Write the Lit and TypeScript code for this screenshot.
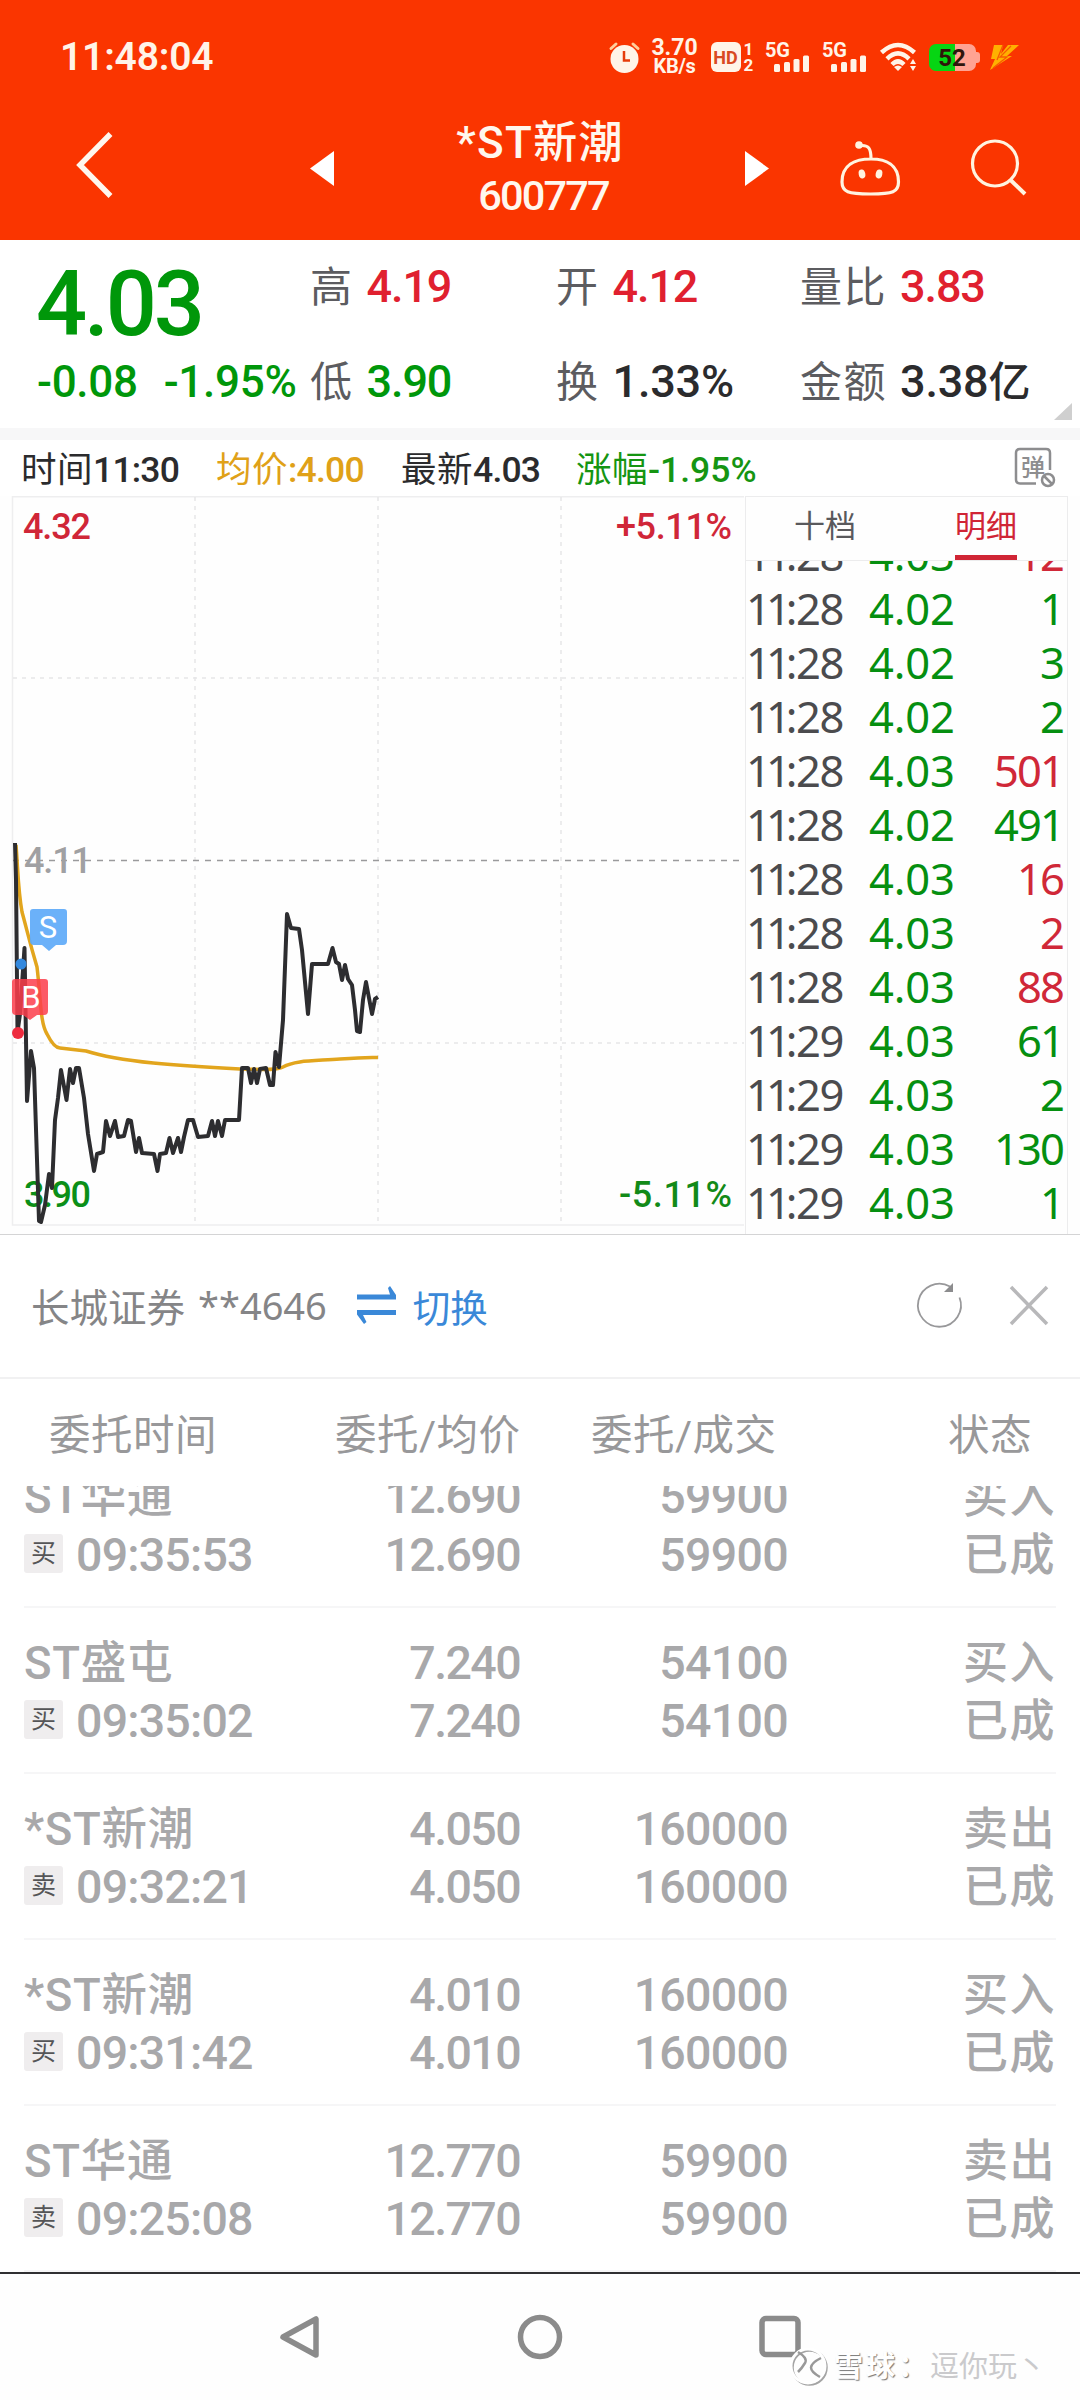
import { LitElement, html, svg, css } from "lit";
import { customElement, property } from "lit/decorators.js";
import { classMap } from "lit/directives/class-map.js";

const base = css`
  * { box-sizing: border-box; }
  :host {
    display: block;
    font-family: Roboto, "Noto Sans CJK SC", "Liberation Sans", sans-serif;
    color: #2b2b2d;
    white-space: nowrap;
  }
  svg { display: block; flex: none; overflow: visible; }
`;

@customElement("status-bar")
class StatusBar extends LitElement {
  static styles = [base, css`
    .bar { height: 114px; padding: 0 61px 0 60px; display: flex; align-items: center; justify-content: space-between; color: #fff4e8; }
    .time { font-size: 39px; font-weight: 600; letter-spacing: -0.2px; }
    .icons { display: flex; align-items: center; }
    .net { width: 46px; margin: 0 13px 0 12px; display: flex; flex-direction: column; align-items: center; font-weight: 700; line-height: 19px; }
    .rate { font-size: 23px; }
    .unit { font-size: 20px; letter-spacing: -0.3px; }
    .hd { width: 30px; height: 30px; border-radius: 6px; background: #fff4e8; color: #d94a22; font: 700 18px/31px Roboto, sans-serif; text-align: center; }
    .sims { width: 12px; margin: 0 10px 0 2px; font: 700 17px/16px Roboto, sans-serif; text-align: center; }
    .signal { margin-right: 11px; }
    .wifi { margin: 0 11px 0 1px; }
    .battery { width: 47px; height: 27px; border-radius: 7px; background: linear-gradient(90deg, #06d513 55%, #ffa392 55%); color: #30150a; font: 700 24px/28px Roboto, sans-serif; text-align: center; }
    .nub { width: 4px; height: 11px; margin-right: 10.500px; background: #ffa392; border-radius: 0 3px 3px 0; }
  `];
  signal() {
    return html`<svg class="signal" width="46" height="32" viewBox="0 0 46 32" fill="#fff4e8">
      <text x="0" y="15.500" font-size="20" font-weight="700" textLength="25">5G</text>
      <rect x="9" y="23" width="6" height="8" rx="1.5"/><rect x="19" y="21" width="6" height="10" rx="1.5"/>
      <rect x="28.500" y="18" width="6" height="13" rx="1.500"/><rect x="38" y="14.500" width="6" height="16.500" rx="1.500"/>
    </svg>`;
  }
  render() {
    return html`<div class="bar">
      <span class="time">11:48:04</span>
      <div class="icons">
        <svg width="31" height="31" viewBox="0 0 31 31" fill="none" stroke="#fff4e8">
          <circle cx="15.500" cy="17" r="14" fill="#fff4e8" stroke="none"/>
          <path d="M2 6.500 7 2M29 6.500 24 2" stroke-width="3" stroke-linecap="round" stroke="#ffcf9c"/>
          <path d="M15 9v9.500h6" stroke="#e63b0a" stroke-width="2.500"/>
        </svg>
        <div class="net"><span class="rate">3.70</span><span class="unit">KB/s</span></div>
        <div class="hd">HD</div>
        <div class="sims">1<br>2</div>
        ${this.signal()}${this.signal()}
        <svg class="wifi" width="38" height="30" viewBox="0 0 38 30" fill="none" stroke="#fff4e8" stroke-width="4.500">
          <path d="M1.500 10.500Q18 -4.500 34.500 10.500M7 16.800Q18 6 29 16.800M12 22.500Q18 16.500 24 22.500"/>
          <path d="M14 25q4-3 8 0l-4 4zM30 22l3-5 3 5zM30 24h6l-3 5z" fill="#fff4e8" stroke="none"/>
        </svg>
        <div class="battery">52</div><div class="nub"></div>
        <svg width="29" height="25" viewBox="0 0 29 25"><path d="M4 0h9l-2 9L18 0h11L17 11h5L0 25 5 14H1z" fill="#ffb000"/><path d="M13 0 7 15M21 1 10 12h7L3 23" stroke="#f75a00" stroke-width="1.300" fill="none"/></svg>
      </div>
    </div>`;
  }
}

@customElement("title-bar")
class TitleBar extends LitElement {
  static styles = [base, css`
    .bar { height: 126px; padding: 0 54px 0 76px; display: grid; grid-template-columns: 234px 24px 411px 95px 131px 1fr; align-items: start; color: #fff7ee; }
    .back { margin-top: 18px; }
    .arrow { margin-top: 37px; }
    .names { display: flex; flex-direction: column; align-items: center; }
    .name { margin: 2px 0 0 1px; font-size: 44px; line-height: 55px; font-weight: 500; letter-spacing: 1.300px; }
    .code { margin-left: 8px; font-size: 41.500px; line-height: 50px; font-weight: 500; letter-spacing: -1.800px; }
    .robot { margin-top: 27px; }
    .search { margin-top: 25px; }
  `];
  render() {
    return html`<div class="bar">
      <svg class="back" width="40" height="66" viewBox="0 0 40 66" fill="none" stroke="#fff7ee" stroke-width="5.500"><path d="M34.500 2 4 33l30.500 31"/></svg>
      <svg class="arrow" width="24" height="35" viewBox="0 0 24 35"><path d="M24 0v35L0 17.500z" fill="#fff"/></svg>
      <div class="names"><span class="name">*ST新潮</span><span class="code">600777</span></div>
      <svg class="arrow" width="24" height="35" viewBox="0 0 24 35"><path d="M0 0v35l24-17.500z" fill="#fff"/></svg>
      <svg class="robot" width="61" height="57" viewBox="0 0 61 57" fill="none" stroke="#fff4e0" stroke-width="3.200">
        <path d="M31 18C46 18 58.500 24 58.500 41 58.500 51 53 53 30.500 53S2 51 2 41C2 24 15 18 31 18zM31 18C31 8 29 4.500 22 4.500"/>
        <circle cx="19" cy="4" r="3.800" fill="#fff4e0" stroke="none"/>
        <ellipse cx="22" cy="33" rx="3.300" ry="4.500" fill="#fff4e0" stroke="none" transform="rotate(-12 22 33)"/>
        <ellipse cx="39" cy="33" rx="3.300" ry="4.500" fill="#fff4e0" stroke="none" transform="rotate(12 39 33)"/>
      </svg>
      <svg class="search" width="56" height="58" viewBox="0 0 56 58" fill="none" stroke="#fff4e0" stroke-width="3.200"><circle cx="24" cy="24.500" r="22.500"/><path d="M39.500 41 54 55" stroke-width="4"/></svg>
    </div>`;
  }
}

@customElement("quote-panel")
class QuotePanel extends LitElement {
  static styles = [base, css`
    .panel { position: relative; height: 200px; padding: 0 0 0 37px; border-bottom: 12px solid #f7f7f8; background: #fff; display: grid; grid-template-columns: 273px 246px 244px 1fr; }
    .price { margin-left: -1px; height: 112px; font-size: 90px; line-height: 130px; font-weight: 500; letter-spacing: -3.200px; }
    .change { display: flex; gap: 26px; font-size: 44px; line-height: 61px; font-weight: 500; letter-spacing: -0.300px; }
    .down { color: #00970a; }
    .up { color: #e0202f; }
    .col { display: grid; grid-template-rows: 95px 60px; align-content: start; padding-top: 17px; }
    .item { display: flex; align-items: baseline; gap: 13px; font-size: 45px; line-height: 60px; font-weight: 500; letter-spacing: -1.100px; }
    .label { font-size: 42px; font-weight: 400; color: #5c5c60; letter-spacing: 1.500px; }
    .wide { letter-spacing: -0.200px; }
    .unit { font-size: 42px; }
    .corner { position: absolute; right: 8px; bottom: 8px; }
  `];
  item(label: string, value: string, tone = "", unit = "") {
    return html`<div class="item"><span class="label">${label}</span><span class=${tone}>${value}<span class="unit">${unit}</span></span></div>`;
  }
  render() {
    return html`<div class="panel">
      <div class="down"><div class="price">4.03</div><div class="change"><span>-0.08</span><span>-1.95%</span></div></div>
      <div class="col">${this.item("高", "4.19", "up")}${this.item("低", "3.90", "down")}</div>
      <div class="col">${this.item("开", "4.12", "up")}${this.item("换", "1.33%", "wide")}</div>
      <div class="col">${this.item("量比", "3.83", "up")}${this.item("金额", "3.38", "wide", "亿")}</div>
      <svg class="corner" width="18" height="17" viewBox="0 0 18 17"><path d="M18 0v17H0z" fill="#cfcfcf"/></svg>
    </div>`;
  }
}

@customElement("cursor-info")
class CursorInfo extends LitElement {
  static styles = [base, css`
    .bar { height: 56px; padding: 0 24px 0 21px; display: grid; grid-template-columns: 195px 185px 175px 1fr 42px; align-items: start; font-size: 35.500px; font-weight: 500; letter-spacing: -0.800px; background: #fff; line-height: 61px; }
    .cjk { font-size: 35.500px; font-weight: 400; letter-spacing: 0.500px; }
    .avg { color: #e0a118; }
    .pct { color: #159512; letter-spacing: 0; }
    .danmu { margin-top: 8px; }
  `];
  render() {
    return html`<div class="bar">
      <span><span class="cjk">时间</span>11:30</span>
      <span class="avg"><span class="cjk">均价</span>:4.00</span>
      <span><span class="cjk">最新</span>4.03</span>
      <span class="pct"><span class="cjk">涨幅</span>-1.95%</span>
      <svg class="danmu" width="42" height="40" viewBox="0 0 42 40" fill="none" stroke="#8d8d8f" stroke-width="2.500">
        <path d="M22 35.500H6q-4 0-4-4V5q0-4 4-4h26q4 0 4 4v17"/>
        <circle cx="34" cy="32" r="6"/><path d="m30 28 8 8"/>
        <text x="7" y="27.500" font-size="24" fill="#8d8d8f" stroke="none">弹</text>
      </svg>
    </div>`;
  }
}

@customElement("trend-chart")
class TrendChart extends LitElement {
  static styles = [base, css`
    .chart { display: block; }
    .lbl { font-size: 36px; font-weight: 500; }
  `];
  render() {
    const price = [
      [15, 843], [16, 880], [17.5, 1032], [20, 1014], [24.5, 948], [27, 1101], [31, 1051], [34, 1068], [39, 1221], [41, 1222], [45, 1205], [49, 1174], [52, 1188],
      [55, 1120], [58, 1098], [61, 1070], [66.500, 1100], [70, 1069], [73, 1083], [76, 1068], [79, 1068], [84, 1098], [88, 1134], [94, 1171], [97, 1154], [103, 1152],
      [106, 1121], [110, 1136], [115, 1121], [118, 1137], [124, 1136], [128, 1120], [131, 1121], [136, 1152], [139, 1138], [142, 1153], [154, 1154], [157.500, 1171],
      [160, 1154], [166, 1153], [169.500, 1138], [173, 1153], [178, 1138], [181, 1152], [184, 1137], [188, 1120], [193, 1120], [198, 1137], [208, 1136], [212, 1121],
      [215, 1136], [218, 1121], [222, 1136], [225, 1120], [239, 1120], [242, 1068], [248, 1068], [251, 1083], [254, 1069], [257, 1083], [260, 1069], [266, 1068],
      [270, 1085], [273, 1085], [275.500, 1052], [279, 1067], [283, 1020], [287, 914], [291, 928], [299, 929], [302, 950], [308, 1014], [312, 964], [328, 964],
      [332.500, 948], [336, 962], [339, 964], [342, 980], [345, 965], [348, 979], [352, 985], [355, 1010], [357, 1031], [360, 1032], [363, 1000], [366, 982],
      [369, 998], [372, 1014], [375, 999], [378, 997],
    ];
    const avg = "M16 845C18 870 18 890 22 912C27 930 29 940 37 967C41 1000 40 1022 47 1034Q54 1048 60 1048L86 1051C120 1062 180 1066 240 1069C258 1069 275 1071 283 1067C295 1060 315 1061 340 1059Q365 1057 378 1057.500";
    return html`<svg class="chart" width="745" height="738" viewBox="0 496 745 738">
      <g fill="none" stroke="#eeeeef" stroke-width="1.500">
        <path d="M12.500 496.700H744M12.500 496v729H744"/>
        <path d="M195 497v728M378 497v728M561 497v728M13 678h731M13 1043h731" stroke="#e6e6e8" stroke-dasharray="4 5"/>
      </g>
      <path d="M13 860.500H742" stroke="#9a9a9c" stroke-width="1.500" stroke-dasharray="6 6"/>
      <text class="lbl" x="24" y="873" fill="#a0a0a2" textLength="68">4.11</text>
      <text class="lbl" x="24" y="1207" fill="#0b8f18" textLength="67">3.90</text>
      <path d=${avg} fill="none" stroke="#e2a51d" stroke-width="3.500"/>
      <polyline points=${price.map((p) => p.join(",")).join(" ")} fill="none" stroke="#2d2d30" stroke-width="4" stroke-linejoin="round"/>
      <text class="lbl" x="23" y="539" fill="#d02638" textLength="68">4.32</text>
      <text class="lbl" x="616" y="539" fill="#d02638" textLength="116">+5.11%</text>
      <text class="lbl" x="619" y="1207" fill="#128a18" textLength="113">-5.11%</text>
      ${svg`<circle cx="21" cy="964" r="5.500" fill="#3388dd"/><circle cx="18" cy="1033" r="6" fill="#ee2b3e"/>
      <path d="M33 909h31q3 0 3 3v29q0 4-4 4h-7l-7 6-7-6h-8q-4 0-4-4v-29q0-3 3-3z" fill="#5eaaf8" fill-opacity=".92"/>
      <path d="M15 979h30q3 0 3 3v29q0 4-4 4h-7l-7 5-7-5h-7q-4 0-4-4v-29q0-3 3-3z" fill="#fb3d4b" fill-opacity=".85"/>
      <text x="48" y="938" font-size="31" fill="#fff" text-anchor="middle">S</text>
      <text x="31" y="1008" font-size="31" fill="#fff" text-anchor="middle">B</text>`}
    </svg>`;
  }
}

@customElement("tick-list")
class TickList extends LitElement {
  static styles = [base, css`
    .panel { width: 323px; height: 738px; border: 1px solid #ececed; border-width: 1px 1px 0; display: flex; flex-direction: column; }
    .tabs { height: 64px; padding: 0 50px 0 48px; display: flex; justify-content: space-between; border-bottom: 1px solid #ececed; font-size: 31px; line-height: 60px; color: #59595c; }
    .active { color: #d02535; border-bottom: 5px solid #d02535; }
    .rows { flex: 1; overflow: hidden; display: flex; flex-direction: column; justify-content: flex-end; }
    .row { flex: none; height: 54px; padding: 0 4px 0 0; display: grid; grid-template-columns: 123px 1fr auto; font: 400 43.500px/46px "Noto Sans", sans-serif; }
    .row:last-child { margin-bottom: 1px; }
    .t { color: #4b4b4e; }
    .ones { letter-spacing: -5px; }
    .rest { letter-spacing: -1.400px; }
    .p, .v { color: #058f10; letter-spacing: -0.100px; }
    .v { letter-spacing: -1.900px; }
    .v.red { color: #d02838; }
  `];
  rows: [string, string, string, boolean][] = [
    ["11:28", "4.03", "12", true], ["11:28", "4.02", "1", false], ["11:28", "4.02", "3", false], ["11:28", "4.02", "2", false],
    ["11:28", "4.03", "501", true], ["11:28", "4.02", "491", false], ["11:28", "4.03", "16", true], ["11:28", "4.03", "2", true],
    ["11:28", "4.03", "88", true], ["11:29", "4.03", "61", false], ["11:29", "4.03", "2", false], ["11:29", "4.03", "130", false],
    ["11:29", "4.03", "1", false],
  ];
  render() {
    return html`<div class="panel">
      <div class="tabs"><span>十档</span><span class="active">明细</span></div>
      <div class="rows">${this.rows.map(([t, p, v, red]) => html`<div class="row"><span class="t"><span class="ones">${t.slice(0, 2)}</span><span class="rest">${t.slice(2)}</span></span><span class="p">${p}</span><span class=${classMap({ v: true, red })}>${v}</span></div>`)}</div>
    </div>`;
  }
}

@customElement("account-bar")
class AccountBar extends LitElement {
  static styles = [base, css`
    .bar { height: 145px; padding: 0 30px 2px 31px; border-top: 1px solid #d4d4d5; border-bottom: 2px solid #f1f1f2; display: flex; align-items: center; background: #fff; font-size: 38.500px; color: #858587; }
    .num { font-family: "Noto Sans", sans-serif; font-size: 38px; margin-left: 13px; font-weight: 400; letter-spacing: 0; }
    .swap { margin: 0 16px 0 30px; }
    .switch { flex: 1; font-size: 37.500px; color: #3a88d8; }
    .refresh { margin-right: 46px; }
  `];
  render() {
    return html`<div class="bar">
      <span>长城证券</span><span class="num">**4646</span>
      <svg class="swap" width="40" height="40" viewBox="0 0 40 40" fill="#3a88d8"><path d="M0 9.500h33L31 3l2-2 6 9v4.500H0zM39 25H0v4.500L7 39l2.500-2L6 30h33z"/></svg>
      <span class="switch">切换</span>
      <svg class="refresh" width="46" height="46" viewBox="0 0 46 46" fill="none" stroke="#98989a" stroke-width="1.800"><path d="M43.500 15.500A21.500 21.500 0 1 1 34 4.500"/><path d="M37 1v9h-9z" fill="#8c8c8e" stroke="none"/></svg>
      <svg width="42" height="42" viewBox="0 0 42 42" fill="none" stroke="#b8b8ba" stroke-width="3.500"><path d="m3 3 36 37M39 3 3 40"/></svg>
    </div>`;
  }
}

@customElement("order-row")
class OrderRow extends LitElement {
  @property() name = "";
  @property() side = "";
  @property() time = "";
  @property() price = "";
  @property() qty = "";
  static styles = [base, css`
    .row { height: 166px; margin: 0 24px; padding: 27px 0 0; border-bottom: 2px solid #f6f6f7; display: grid; grid-template-columns: 230px 266px 268px 1fr; grid-auto-rows: 57.500px; line-height: 57px; font-size: 46.500px; font-weight: 500; letter-spacing: -0.700px; color: #a8a8aa; }
    .name { font-size: 45.500px; letter-spacing: 0.700px; }
    .when { display: flex; align-items: center; gap: 13px; letter-spacing: -0.800px; }
    .badge { width: 39px; height: 39px; margin-bottom: 4px; border-radius: 3px; background: #efedee; color: #555557; font-size: 25px; font-weight: 400; line-height: 39px; text-align: center; letter-spacing: 0; }
    .num { text-align: right; }
    .price { letter-spacing: -1.600px; }
    .state { text-align: right; font-size: 45px; letter-spacing: 1.500px; }
  `];
  render() {
    return html`<div class="row">
      <span class="name">${this.name}</span><span class="num price">${this.price}</span><span class="num">${this.qty}</span><span class="state">${this.side === "买" ? "买入" : "卖出"}</span>
      <span class="when"><span class="badge">${this.side}</span>${this.time}</span><span class="num price">${this.price}</span><span class="num">${this.qty}</span><span class="state">已成</span>
    </div>`;
  }
}

@customElement("order-list")
class OrderList extends LitElement {
  static styles = [base, css`
    .head { height: 107px; padding: 0 48px 0 49px; display: grid; grid-template-columns: 286px 256px 1fr auto; font-size: 41.500px; line-height: 114px; color: #98989a; letter-spacing: 0.500px; background: #fff; }
    .body { height: 786px; overflow: hidden; display: flex; flex-direction: column; justify-content: flex-end; background: #fff; }
    order-row { flex: none; }
  `];
  orders = [
    ["ST华通", "买", "09:35:53", "12.690", "59900"],
    ["ST盛屯", "买", "09:35:02", "7.240", "54100"],
    ["*ST新潮", "卖", "09:32:21", "4.050", "160000"],
    ["*ST新潮", "买", "09:31:42", "4.010", "160000"],
    ["ST华通", "卖", "09:25:08", "12.770", "59900"],
  ];
  render() {
    return html`<div class="head"><span>委托时间</span><span>委托/均价</span><span>委托/成交</span><span>状态</span></div>
      <div class="body">${this.orders.map((o) => html`<order-row .name=${o[0]} .side=${o[1]} .time=${o[2]} .price=${o[3]} .qty=${o[4]}></order-row>`)}</div>`;
  }
}

@customElement("nav-bar")
class NavBar extends LitElement {
  static styles = [base, css`
    .nav { position: relative; height: 128px; border-top: 2px solid #303032; padding: 0 278px; display: flex; align-items: center; justify-content: space-between; background: #fefefe; }
    .mark { position: absolute; left: 789px; top: 73px; display: flex; align-items: center; color: #fff; font-size: 29px; line-height: 40px; text-shadow: 1px 1px 1px #777; }
    .brand { margin-left: 5px; font-weight: 600; letter-spacing: 3px; }
    .user { color: #cacacc; text-shadow: none; }
  `];
  render() {
    return html`<div class="nav">
      <svg width="44" height="46" viewBox="0 0 44 46" fill="none" stroke="#8b8b8b" stroke-width="5.500" stroke-linejoin="round"><path d="M38 5v36L5 23z"/></svg>
      <svg width="46" height="46" viewBox="0 0 46 46" fill="none" stroke="#8b8b8b" stroke-width="5.500"><circle cx="23" cy="23" r="19.500"/></svg>
      <svg width="44" height="46" viewBox="0 0 44 46" fill="none" stroke="#8b8b8b" stroke-width="5.500"><rect x="4" y="4.500" width="36" height="36" rx="4"/></svg>
      <div class="mark">
        <svg width="40" height="40" viewBox="0 0 40 40" fill="none"><circle cx="20.500" cy="20.500" r="17" stroke="#a4a4a4" stroke-width="2.500"/><circle cx="19" cy="19" r="17" stroke="#fff" stroke-width="3"/><path d="M9 5q10 6 7 11T9 25M32 11q-10 5-10 9.500T31 30" stroke="#999" stroke-width="2.500"/></svg>
        <span class="brand">雪球：</span><span class="user">逗你玩丶</span>
      </div>
    </div>`;
  }
}

@customElement("app-root")
class AppRoot extends LitElement {
  static styles = [base, css`
    :host { width: 1080px; height: 2400px; overflow: hidden; background: #fff; }
    .top { background: #fa3500; }
    .market { display: flex; height: 738px; background: #fefefe; }
  `];
  render() {
    return html`
      <div class="top"><status-bar></status-bar><title-bar></title-bar></div>
      <quote-panel></quote-panel>
      <cursor-info></cursor-info>
      <div class="market"><trend-chart></trend-chart><tick-list></tick-list></div>
      <account-bar></account-bar>
      <order-list></order-list>
      <nav-bar></nav-bar>`;
  }
}
